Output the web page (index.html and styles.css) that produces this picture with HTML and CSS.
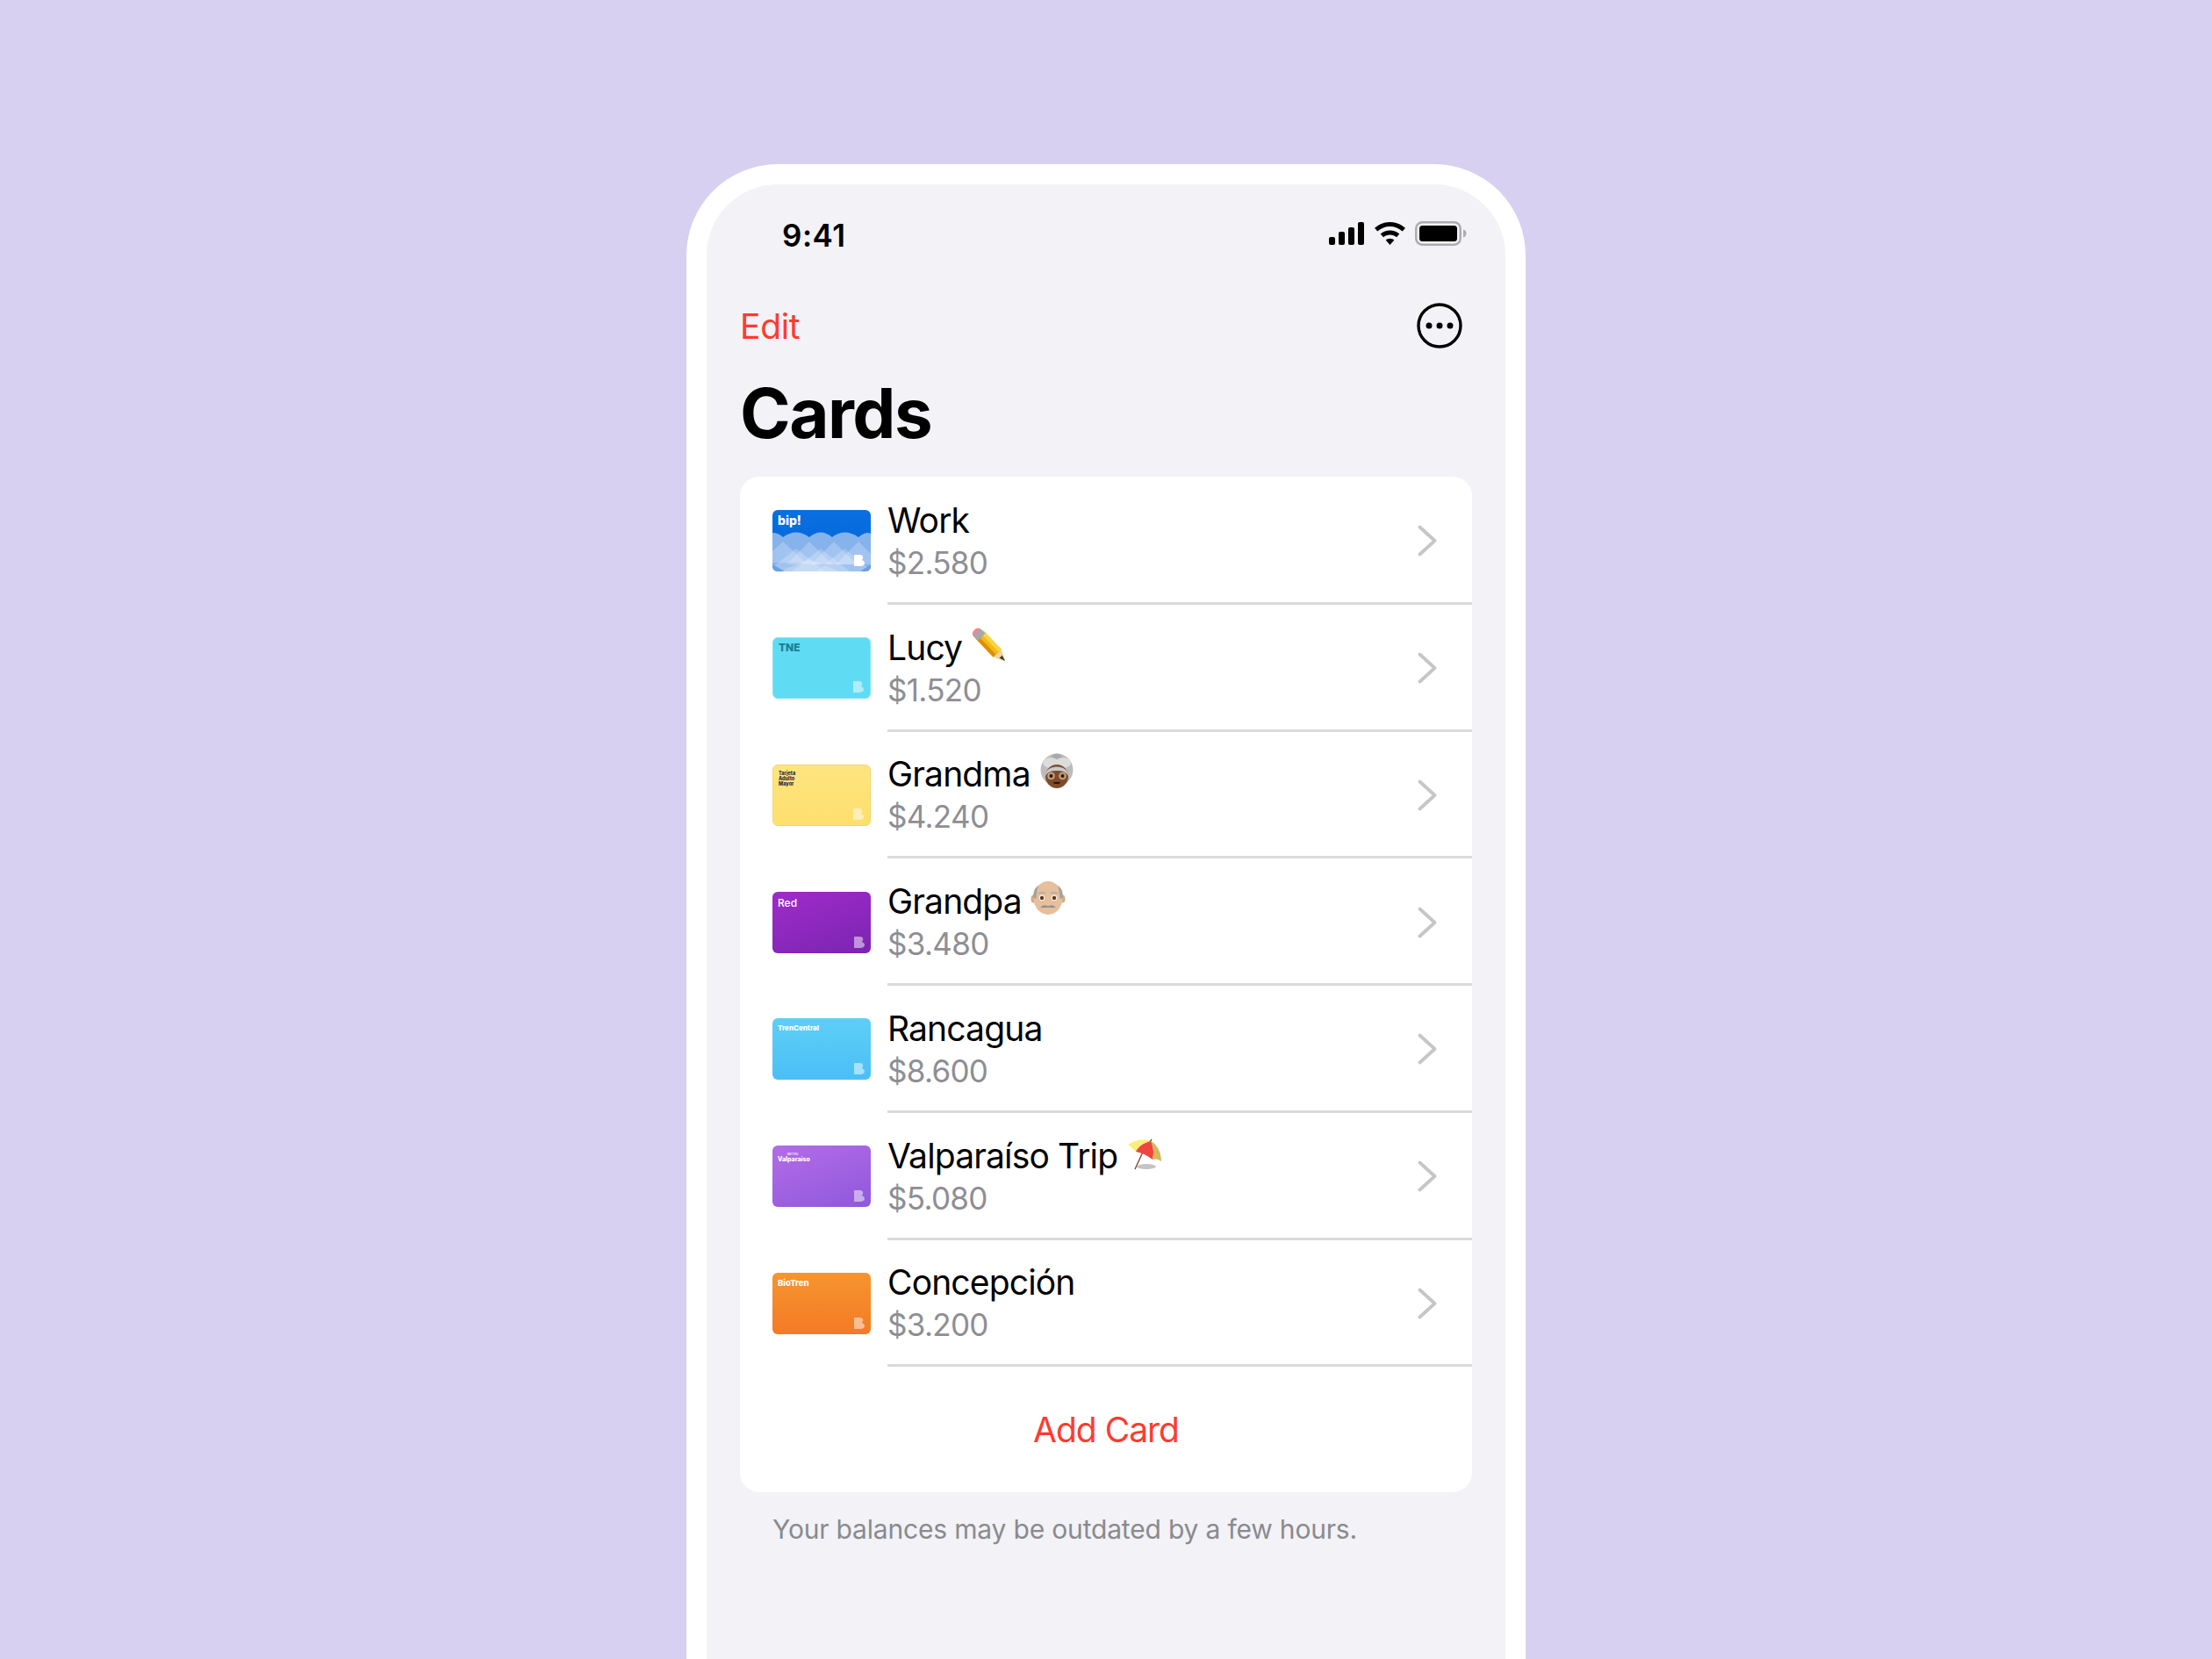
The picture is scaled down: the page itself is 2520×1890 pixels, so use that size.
FILE: index.html
```html
<!DOCTYPE html>
<html lang="en">
<head>
    <meta charset="UTF-8">
    <meta name="viewport" content="width=device-width, initial-scale=1.0">
    <title>Cards</title>
    <link rel="stylesheet" href="styles.css">
</head>
<body>
    <svg class="defs" width="0" height="0">
        <defs>
            <symbol id="mark" viewBox="0 0 12 13">
                <path d="M1 0H6.500C9 0 10.200 1.300 10.200 3 10.200 4.300 9.500 5.300 8.600 6 10.600 6.500 12 7.900 12 9.500 12 11.600 10 13 7 13H1C.4 13 0 12.600 0 12V1C0 .4.4 0 1 0Z"/>
            </symbol>
            <symbol id="chevron" viewBox="0 0 22 36">
                <path d="M2.500 2.500L19.500 18 2.500 33.500" fill="none" stroke="#c6c6c9" stroke-width="3.800" stroke-linecap="round" stroke-linejoin="round"/>
            </symbol>
        </defs>
    </svg>

    <div class="phone">
        <div class="status-bar">
            <span class="time">9:41</span>
            <div class="status-icons">
                <svg class="signal" width="40" height="26" viewBox="0 0 40 26">
                    <rect x="0" y="17" width="7" height="9" rx="2"/>
                    <rect x="11" y="11" width="7" height="15" rx="2"/>
                    <rect x="22" y="6" width="7" height="20" rx="2"/>
                    <rect x="33" y="0" width="7" height="26" rx="2"/>
                </svg>
                <svg class="wifi" width="35" height="26" viewBox="0 0 35 26">
                    <path d="M17.500 0C24 0 30 2.400 35 6.800l-3.300 3.700C27.700 7 22.800 5 17.500 5S7.300 7 3.300 10.500L0 6.800C5 2.400 11 0 17.500 0Z"/>
                    <path d="M17.500 9.500c4 0 7.700 1.500 10.800 4.100l-3.300 3.700c-2.100-1.800-4.700-2.800-7.500-2.800s-5.400 1-7.500 2.800l-3.300-3.700c3.100-2.600 6.800-4.100 10.800-4.100Z"/>
                    <path d="M17.500 18.700c1.900 0 3.500.7 4.800 1.800L17.500 26l-4.800-5.500c1.300-1.100 2.900-1.800 4.800-1.800Z"/>
                </svg>
                <svg class="battery" width="59" height="28" viewBox="0 0 59 28">
                    <rect x="1.250" y="1.250" width="50.500" height="25.500" rx="7" fill="none" stroke="#adadb0" stroke-width="2.500"/>
                    <rect x="5" y="5" width="43" height="18" rx="3.500"/>
                    <path d="M55 9.500c2 .5 3.500 2.300 3.500 4.500s-1.500 4-3.500 4.500Z" fill="#adadb0"/>
                </svg>
            </div>
        </div>

        <div class="nav">
            <span class="edit">Edit</span>
            <svg class="more" width="52" height="52" viewBox="0 0 52 52">
                <circle cx="26" cy="26" r="24" fill="none" stroke="#000" stroke-width="3.400"/>
                <circle cx="14" cy="26" r="3.500"/>
                <circle cx="26" cy="26" r="3.500"/>
                <circle cx="38" cy="26" r="3.500"/>
            </svg>
        </div>

        <h1 class="title">Cards</h1>

        <div class="group">
            <div class="row">
                <div class="card card-bip">
                    <svg class="waves" viewBox="0 0 112 70" preserveAspectRatio="none">
                        <path d="M0 26Q7 26 12 31 27 20 42 31 55 20 68 31 82 20 98 31 107 24 112 27V70H0Z" fill="#86b3ec"/>
                        <g fill="#fff" fill-opacity=".22">
                            <path d="M-14 60L12 36 38 60Z"/>
                            <path d="M16 62L42 36 68 62Z"/>
                            <path d="M44 62L70 36 96 62Z"/>
                            <path d="M72 62L98 36 124 62Z"/>
                            <path d="M-6 70L27 44 60 70Z"/>
                            <path d="M22 70L55 44 88 70Z"/>
                            <path d="M50 70L82 44 114 70Z"/>
                            <path d="M8 70L42 56 76 70Z"/>
                        </g>
                        <path d="M0 70V62L14 70ZM112 70V62L100 70Z" fill="#6d9ee6"/>
                    </svg>
                    <span class="card-label label-bip">bip!</span>
                    <svg class="mark mark-solid"><use href="#mark"/></svg>
                </div>
                <div class="row-text">
                    <div class="name">Work</div>
                    <div class="price">$2.580</div>
                </div>
                <svg class="chevron"><use href="#chevron"/></svg>
            </div>

            <div class="row">
                <div class="card card-tne">
                    <span class="card-label label-tne">TNE</span>
                    <svg class="mark"><use href="#mark"/></svg>
                </div>
                <div class="row-text">
                    <div class="name">Lucy
                        <svg class="emoji" viewBox="0 0 40 40">
                            <path d="M14.600 4.400L34.600 25.400 39 39 25.400 34.600 5.400 13.600Z" fill="#f5b915"/>
                            <path d="M14.600 4.400L34.600 25.400 31.500 28.500 11.500 7.500Z" fill="#fbd544"/>
                            <path d="M8.500 10.500L28.500 31.500 25.400 34.600 5.400 13.600Z" fill="#d98f0b"/>
                            <path d="M34.600 25.400L39 39 25.400 34.600C28 33 33 28 34.600 25.400Z" fill="#f0d5a5"/>
                            <path d="M35.500 32.500L39 39 32.500 35.500C33.500 35 35 33.500 35.500 32.500Z" fill="#333"/>
                            <path d="M3 11C-1 7 6.500-1.500 11 2.500L14 5 6 13Z" fill="#e78c8e"/>
                            <path d="M11 2.500L16.500 7.500 8 16 3 11Z" fill="#a6a8ad"/>
                        </svg>
                    </div>
                    <div class="price">$1.520</div>
                </div>
                <svg class="chevron"><use href="#chevron"/></svg>
            </div>

            <div class="row">
                <div class="card card-senior">
                    <span class="card-label label-senior">Tarjeta<br>Adulto<br>Mayor</span>
                    <svg class="mark"><use href="#mark"/></svg>
                </div>
                <div class="row-text">
                    <div class="name">Grandma
                        <svg class="emoji" viewBox="0 0 40 40">
                            <circle cx="20" cy="19" r="18.500" fill="#bcbcbe"/>
                            <circle cx="20" cy="7" r="6.500" fill="#a9a9ab"/>
                            <ellipse cx="13" cy="11" rx="9" ry="6" fill="#dcdcdd"/>
                            <ellipse cx="27" cy="11" rx="9" ry="6" fill="#dcdcdd"/>
                            <ellipse cx="20" cy="26.500" rx="13" ry="13.500" fill="#7f4c2a"/>
                            <path d="M7 26C7 19 13 15.500 20 15.500S33 19 33 26C30 20.500 25 20 20 20S10 20.500 7 26Z" fill="#c9c9ca"/>
                            <circle cx="13.500" cy="26" r="3.700" fill="#a5784f" stroke="#d9c6a8" stroke-width="1"/>
                            <circle cx="26.500" cy="26" r="3.700" fill="#a5784f" stroke="#d9c6a8" stroke-width="1"/>
                            <circle cx="13.500" cy="26" r="1.700" fill="#1d0f08"/>
                            <circle cx="26.500" cy="26" r="1.700" fill="#1d0f08"/>
                            <path d="M15.500 33.500C17 35.500 23 35.500 24.500 33.500 22 32.500 18 32.500 15.500 33.500Z" fill="#2c130a"/>
                        </svg>
                    </div>
                    <div class="price">$4.240</div>
                </div>
                <svg class="chevron"><use href="#chevron"/></svg>
            </div>

            <div class="row">
                <div class="card card-red">
                    <span class="card-label label-red">Red</span>
                    <svg class="mark"><use href="#mark"/></svg>
                </div>
                <div class="row-text">
                    <div class="name">Grandpa
                        <svg class="emoji" viewBox="0 0 40 40">
                            <ellipse cx="3.500" cy="21" rx="3" ry="4.500" fill="#d9a983"/>
                            <ellipse cx="36.500" cy="21" rx="3" ry="4.500" fill="#d9a983"/>
                            <ellipse cx="20" cy="20" rx="16.500" ry="19" fill="#e6bf9d"/>
                            <path d="M3 20C3 12 5 8 9 6 7 12 7 16 6.500 21Z" fill="#a3a39e"/>
                            <path d="M37 20C37 12 35 8 31 6 33 12 33 16 33.500 21Z" fill="#a3a39e"/>
                            <circle cx="13" cy="20" r="3.200" fill="#fff3e2"/>
                            <circle cx="27" cy="20" r="3.200" fill="#fff3e2"/>
                            <circle cx="13" cy="20" r="2.200" fill="#5d3a1f"/>
                            <circle cx="27" cy="20" r="2.200" fill="#5d3a1f"/>
                            <path d="M9 15C11 13.500 15 13.500 17 15M23 15C25 13.500 29 13.500 31 15" fill="none" stroke="#a5a5a0" stroke-width="1.200"/>
                            <path d="M11 30.500C14 28 17 28 20 29 23 28 26 28 29 30.500 26 31.500 23 31 20 30.500 17 31 14 31.500 11 30.500Z" fill="#8f8f8b"/>
                        </svg>
                    </div>
                    <div class="price">$3.480</div>
                </div>
                <svg class="chevron"><use href="#chevron"/></svg>
            </div>

            <div class="row">
                <div class="card card-tren">
                    <span class="card-label label-tren">TrenCentral</span>
                    <svg class="mark"><use href="#mark"/></svg>
                </div>
                <div class="row-text">
                    <div class="name">Rancagua</div>
                    <div class="price">$8.600</div>
                </div>
                <svg class="chevron"><use href="#chevron"/></svg>
            </div>

            <div class="row">
                <div class="card card-valpo">
                    <span class="card-label label-metro">METRO</span>
                    <span class="card-label label-valpo">Valparaíso</span>
                    <svg class="mark"><use href="#mark"/></svg>
                </div>
                <div class="row-text">
                    <div class="name">Valparaíso Trip
                        <svg class="emoji" viewBox="0 0 40 40">
                            <ellipse cx="23" cy="36" rx="11" ry="3" fill="#c4c4c4"/>
                            <path d="M10 39L21 15M27 8L29 5" stroke="#7a4a3a" stroke-width="1.400"/>
                            <path d="M2 11C9 6 20 4 28 7 20 9 14 13 11 19 8 16 5 13 2 11Z" fill="#fbee78"/>
                            <path d="M11 19C14 13 20 9 28 7 31 13 32 20 30 28 24 23 17 20 11 19Z" fill="#ef453f"/>
                            <path d="M28 7C35 10 40 20 40 30 36 27 33 27 30 28 32 20 31 13 28 7Z" fill="#d9b75a"/>
                        </svg>
                    </div>
                    <div class="price">$5.080</div>
                </div>
                <svg class="chevron"><use href="#chevron"/></svg>
            </div>

            <div class="row">
                <div class="card card-bio">
                    <span class="card-label label-bio">BioTren</span>
                    <svg class="mark"><use href="#mark"/></svg>
                </div>
                <div class="row-text">
                    <div class="name">Concepción</div>
                    <div class="price">$3.200</div>
                </div>
                <svg class="chevron"><use href="#chevron"/></svg>
            </div>

            <div class="add-card">Add Card</div>
        </div>

        <p class="footnote">Your balances may be outdated by a few hours.</p>
    </div>
</body>
</html>
```

FILE: styles.css
```css
body {
    margin: 0;
    height: 1890px;
    overflow: hidden;
    background: #d7d0f0;
    font-family: Inter, "Liberation Sans", sans-serif;
    color: #000;
    display: flex;
    justify-content: center;
}
.defs {
    display: block;
    width: 0;
    height: 0;
    flex: none;
}
.phone {
    box-sizing: border-box;
    width: 956px;
    height: 1703px;
    margin-top: 187px;
    padding: 0 38px;
    background: #f2f2f7;
    border: solid #fff;
    border-width: 23px 23px 0;
    border-radius: 104px 104px 0 0;
    flex: none;
}

/* status bar */
.status-bar {
    height: 66px;
    padding-top: 25px;
    display: flex;
    align-items: center;
    justify-content: space-between;
    margin-right: 6px;
}
.time {
    margin-left: 48px;
    font-size: 35px;
    font-weight: 600;
    letter-spacing: .5px;
}
.status-icons {
    display: flex;
    align-items: center;
    gap: 12px;
    margin-top: -4px;
}
.wifi {
    margin-right: -1px;
}

/* nav */
.nav {
    margin-top: 44px;
    height: 52px;
    display: flex;
    align-items: center;
    justify-content: space-between;
    padding-right: 11px;
}
.edit {
    font-size: 39px;
    letter-spacing: -.3px;
    color: #ff3b30;
}
.title {
    margin: 26px 0 0;
    height: 120px;
    font-size: 78px;
    line-height: 96px;
    font-weight: 700;
    letter-spacing: -1.5px;
}

/* list */
.group {
    background: #fff;
    border-radius: 22px;
    height: 1157px;
}
.row {
    box-sizing: border-box;
    height: 144.75px;
    padding-top: 2px;
    padding-left: 37px;
    display: flex;
    align-items: center;
    position: relative;
}
.row::after {
    content: "";
    position: absolute;
    left: 168px;
    right: 0;
    bottom: -1px;
    height: 3px;
    background: #dadadc;
}
.row-text {
    margin-left: 19px;
    padding-top: 1px;
    flex: 1;
}
.name {
    font-size: 39px;
    line-height: 48px;
    letter-spacing: -.85px;
    display: flex;
    align-items: flex-start;
}
.price {
    font-size: 35px;
    line-height: 48px;
    letter-spacing: -.7px;
    color: #8e8e93;
}
.chevron {
    width: 22px;
    height: 36px;
    margin-right: 40px;
    flex: none;
}
.add-card {
    height: 144px;
    display: flex;
    align-items: center;
    justify-content: center;
    font-size: 39px;
    letter-spacing: -1px;
    color: #ff3b30;
}
.footnote {
    margin: 22px 0 0 37px;
    font-size: 30px;
    line-height: 40px;
    letter-spacing: -.18px;
    color: #8a8a8e;
}

/* emoji are drawn by hand, no colour emoji font here */
.emoji {
    width: 40px;
    height: 40px;
    margin-left: 10px;
    flex: none;
}

/* card thumbnails */
.card {
    box-sizing: border-box;
    width: 112px;
    height: 70px;
    border-radius: 6px;
    position: relative;
    overflow: hidden;
    flex: none;
}
.card-label {
    position: absolute;
    left: 6px;
    top: 6px;
    font-size: 10px;
    line-height: 11px;
    font-weight: 800;
    white-space: nowrap;
    color: #fff;
}
.mark {
    position: absolute;
    right: 7px;
    bottom: 6px;
    width: 12px;
    height: 13px;
    fill: #fff;
    opacity: .5;
}
.mark-solid {
    opacity: 1;
}
.waves {
    position: absolute;
    left: 0;
    top: 0;
    width: 100%;
    height: 100%;
}
.card-bip {
    background: linear-gradient(#0a6fe0, #0067db);
}
.label-bip {
    font-size: 14px;
    top: 6px;
}
.card-tne {
    background: #5fdcf3;
    border: 1px solid #7fe3f5;
}
.label-tne {
    font-size: 12px;
    color: #1b7d8f;
    top: 5px;
}
.card-senior {
    background: linear-gradient(#fde57f, #fedf6d);
    border: 1px solid #f3d76c;
}
.label-senior {
    font-size: 5.5px;
    line-height: 6px;
    color: #2a2a3c;
}
.card-red {
    background: linear-gradient(160deg, #a02bc9, #7a25b2);
}
.label-red {
    font-size: 12px;
    font-weight: 500;
    top: 7px;
}
.card-tren {
    background: linear-gradient(#5dcff6, #4bbff6);
}
.label-tren {
    font-size: 8px;
}
.card-valpo {
    background: linear-gradient(160deg, #b36ce6, #8f58dd);
}
.label-metro {
    left: 17px;
    top: 5px;
    font-size: 3.5px;
    font-weight: 500;
}
.label-valpo {
    top: 10px;
    font-size: 7px;
}
.card-bio {
    background: linear-gradient(#f6952f, #f47a25);
}
.label-bio {
    font-size: 9.5px;
}
```
